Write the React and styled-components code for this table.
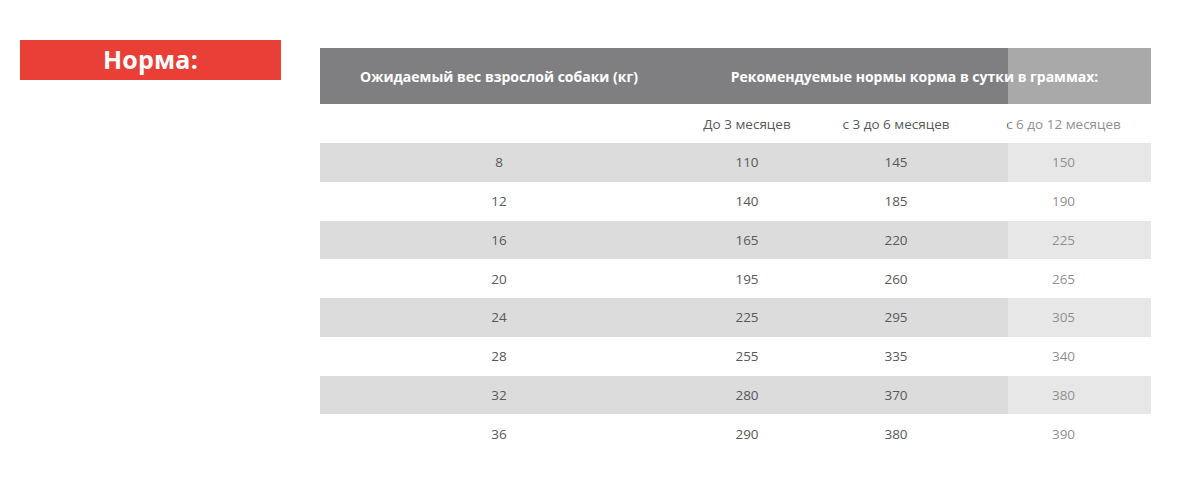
import React from 'react';
import styled, { createGlobalStyle } from 'styled-components';

const GlobalStyle = createGlobalStyle`
  body {
    margin: 0;
    background: #fff;
    font-family: "Open Sans", "Noto Sans", sans-serif;
  }
`;

const Page = styled.div`
  display: flex;
  align-items: flex-start;
  gap: 39px;
  padding: 40px 0 0 20px;
  width: 1179px;
  height: 494px;
  box-sizing: border-box;
`;

const Badge = styled.div`
  width: 261px;
  height: 40px;
  background: #ea3f37;
  color: #fff;
  font-weight: 700;
  font-size: 25px;
  display: flex;
  align-items: center;
  justify-content: center;
  padding-bottom: 2px;
  box-sizing: border-box;
  letter-spacing: 0.2px;
`;

const Table = styled.div`
  position: relative;
  margin-top: 8px;
  width: 831px;
`;

const Row = styled.div`
  display: grid;
  grid-template-columns: 358px 138px 160px 175px;
  align-items: center;
  height: ${p => p.$height || '38.75px'};
  background: ${p => (p.$striped ? '#dcdcdc' : '#fff')};
  color: #585858;
  font-size: 13.5px;
`;

const HeadRow = styled(Row)`
  background: #7f7f81;
  color: #fff;
  font-weight: 700;
  font-size: 14px;
`;

const Cell = styled.div`
  text-align: center;
  grid-column: ${p => p.$span || 'auto'};
`;

const Fade = styled.div`
  position: absolute;
  top: 0;
  bottom: 0;
  left: 688px;
  width: 143px;
  background: rgba(255, 255, 255, 0.33);
  pointer-events: none;
`;

const rows = [
  [8, 110, 145, 150],
  [12, 140, 185, 190],
  [16, 165, 220, 225],
  [20, 195, 260, 265],
  [24, 225, 295, 305],
  [28, 255, 335, 340],
  [32, 280, 370, 380],
  [36, 290, 380, 390],
];

const App = () => (
  <>
    <GlobalStyle />
    <Page>
      <Badge>Норма:</Badge>
      <Table>
        <HeadRow $height="56px">
          <Cell>Ожидаемый вес взрослой собаки (кг)</Cell>
          <Cell $span="2 / span 3">
            Рекомендуемые нормы корма в сутки в граммах:
          </Cell>
        </HeadRow>
        <Row $height="39px">
          <Cell />
          <Cell>До 3 месяцев</Cell>
          <Cell>с 3 до 6 месяцев</Cell>
          <Cell>с 6 до 12 месяцев</Cell>
        </Row>
        {rows.map((r, i) => (
          <Row key={r[0]} $striped={i % 2 === 0}>
            {r.map((v, j) => (
              <Cell key={j}>{v}</Cell>
            ))}
          </Row>
        ))}
        <Fade />
      </Table>
    </Page>
  </>
);

export default App;
